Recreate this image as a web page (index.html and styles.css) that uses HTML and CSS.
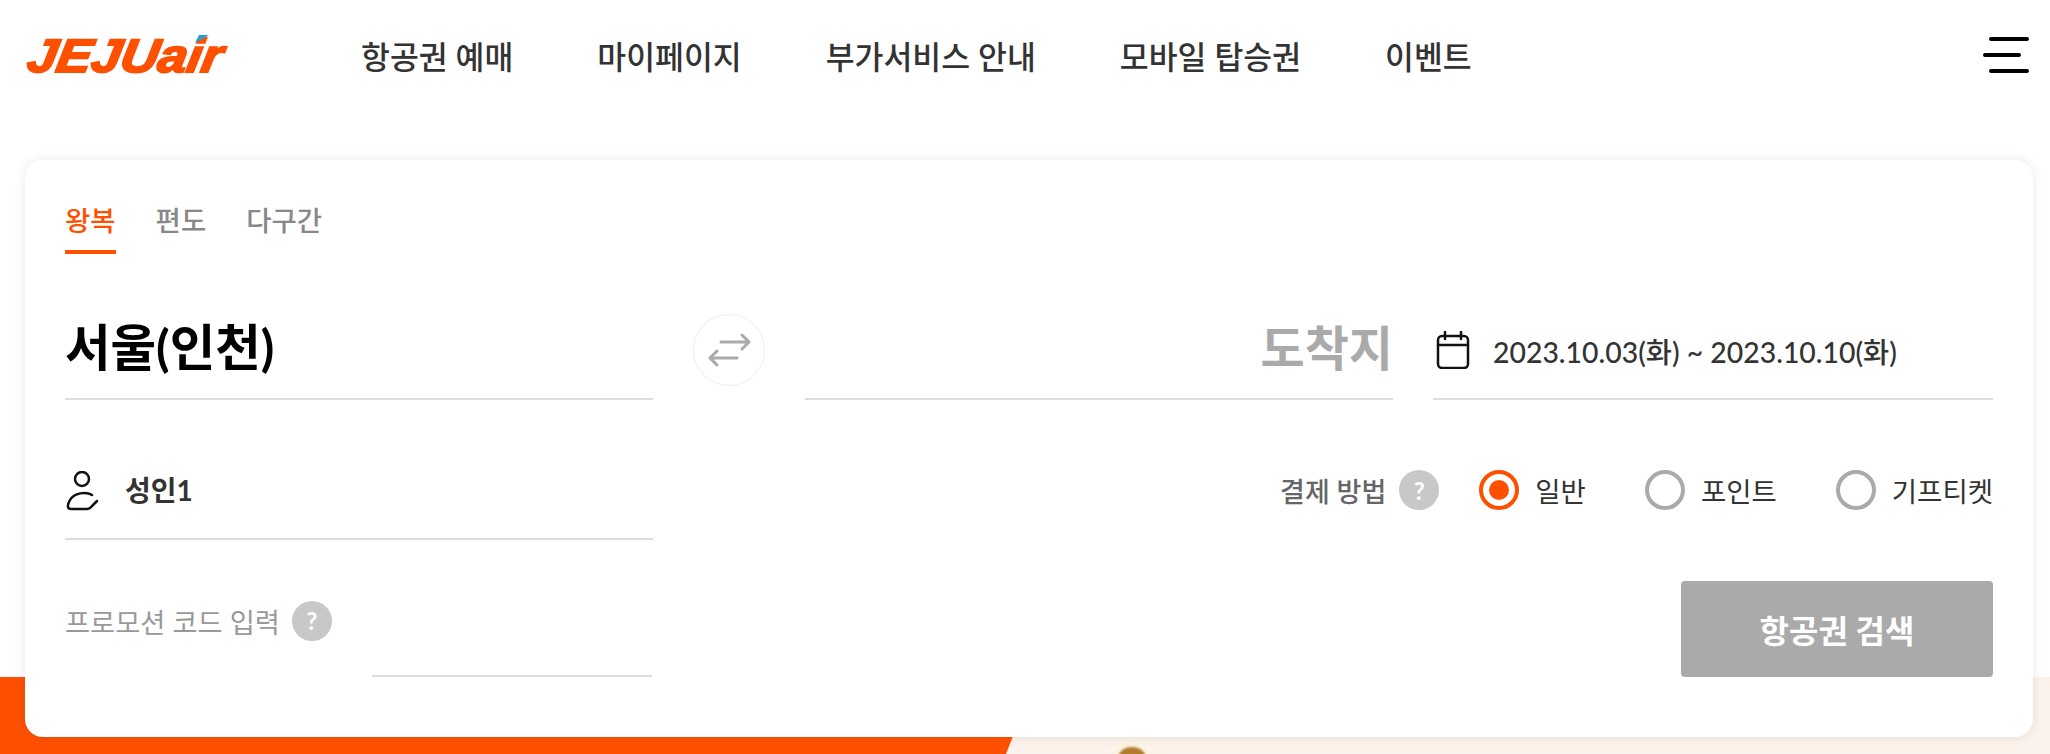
FILE: index.html
```html
<!DOCTYPE html>
<html lang="ko">
<head>
    <meta charset="UTF-8">
    <meta name="viewport" content="width=device-width, initial-scale=1.0">
    <title>JEJUair</title>
    <link rel="stylesheet" href="styles.css">
</head>
<body>
    <header class="header">
        <a class="logo" href="#">
            <span class="logo-text">JEJUair</span>
            <svg class="logo-mark" width="14" height="8" viewBox="0 0 14 8"><polygon points="4,0 14,0 0,8" fill="#1ba3dc"/></svg>
        </a>
        <nav class="nav">
            <a href="#">항공권 예매</a>
            <a href="#">마이페이지</a>
            <a href="#">부가서비스 안내</a>
            <a href="#">모바일 탑승권</a>
            <a href="#">이벤트</a>
        </nav>
        <button class="menu-btn" aria-label="메뉴">
            <svg width="46" height="38" viewBox="0 0 46 38" fill="none" stroke="#000" stroke-width="4" stroke-linecap="round">
                <path d="M8 2H44M2 18H36M8 34H44"/>
            </svg>
        </button>
    </header>

    <main class="search-area">
        <div class="band"><span class="band-figure"></span></div>

        <section class="card">
            <div class="tabs">
                <a class="tab active" href="#">왕복</a>
                <a class="tab" href="#">편도</a>
                <a class="tab" href="#">다구간</a>
            </div>

            <div class="route-row">
                <div class="field city">서울(인천)</div>
                <div class="swap">
                    <button class="swap-btn" aria-label="바꾸기">
                        <svg width="70" height="70" viewBox="0 0 70 70" fill="none" stroke="#aaa" stroke-width="3" stroke-linecap="round" stroke-linejoin="round">
                            <path d="M27 27H55M48 20L55 27L48 34"/>
                            <path d="M43 43H16M23 36L16 43L23 50"/>
                        </svg>
                    </button>
                </div>
                <div class="field city placeholder">도착지</div>
                <div class="field date">
                    <svg width="34" height="38" viewBox="0 0 34 38" fill="none" stroke="#111" stroke-width="2.5" stroke-linecap="round">
                        <rect x="2" y="5" width="30" height="32" rx="4"/>
                        <path d="M2 14H32M9 1V8M25 1V8"/>
                    </svg>
                    <span>2023.10.03(화) ~ 2023.10.10(화)</span>
                </div>
            </div>

            <div class="options-row">
                <div class="field passenger">
                    <svg class="passenger-icon" width="34" height="40" viewBox="0 0 34 40" fill="none" stroke="#111" stroke-width="2.5" stroke-linecap="round" stroke-linejoin="round">
                        <circle cx="16" cy="8" r="7"/>
                        <path d="M26 24C20 20 8 22 4 29C1 34 1 38 5 38H21C24 38 25 36 27 34L31 30"/>
                    </svg>
                    <span>성인1</span>
                </div>
                <div class="payment">
                    <span class="payment-label">결제 방법</span>
                    <span class="help">?</span>
                    <label class="radio checked"><i></i>일반</label>
                    <label class="radio"><i></i>포인트</label>
                    <label class="radio"><i></i>기프티켓</label>
                </div>
            </div>

            <div class="promo-row">
                <div class="promo">
                    <span class="promo-label">프로모션 코드 입력</span>
                    <span class="help">?</span>
                    <span class="promo-input"></span>
                </div>
                <button class="search-btn">항공권 검색</button>
            </div>
        </section>
    </main>
</body>
</html>
```

FILE: styles.css
```css
* {
    box-sizing: border-box;
}
html, body {
    margin: 0;
    height: 754px;
    overflow: hidden;
}
body {
    font-family: Lato, "Noto Sans CJK KR", sans-serif;
    background-color: #fff;
    color: #333;
}
a {
    color: inherit;
    text-decoration: none;
}
button {
    font-family: inherit;
    border: 0;
    padding: 0;
    background: none;
}

.header {
    display: flex;
    align-items: center;
    height: 112px;
    padding: 0 21px 0 24px;
    margin-bottom: 48px;
}
.logo {
    position: relative;
    display: block;
    width: 204px;
    margin-right: 133px;
}
.logo-text {
    display: block;
    font-family: "Liberation Sans", sans-serif;
    font-size: 47px;
    line-height: 50px;
    font-weight: bold;
    font-style: italic;
    color: #ff5000;
    -webkit-text-stroke: 2px #ff5000;
    transform: skewX(-10deg) scaleX(1.11);
    transform-origin: left bottom;
}
.logo-mark {
    position: absolute;
    left: 171px;
    top: 4px;
}
.nav {
    display: flex;
    gap: 84px;
    font-size: 31.4px;
    font-weight: 500;
    flex: 1;
    margin-top: -2px;
}
.menu-btn {
    display: block;
    height: 38px;
}

.search-area {
    position: relative;
    padding: 0 17px 17px 25px;
}
.band {
    position: absolute;
    left: 0;
    right: 0;
    bottom: 0;
    height: 77px;
    background-color: #fbf2ec;
    overflow: hidden;
}
.band::before {
    content: "";
    position: absolute;
    inset: 0;
    background-color: #ff5000;
    clip-path: polygon(0 0, 1036px 0, 1006px 100%, 0 100%);
}
.band-figure {
    position: absolute;
    left: 1118px;
    top: 70px;
    width: 28px;
    height: 22px;
    border-radius: 50%;
    background-color: #b27c2e;
    box-shadow: 0 0 12px 6px #fdf7e2;
    filter: blur(1px);
}
.card {
    position: relative;
    height: 577px;
    padding: 0 40px;
    background-color: #fff;
    border-radius: 18px;
    box-shadow: 0 0 12px rgba(0, 0, 0, 0.09);
}

.tabs {
    display: flex;
    gap: 40px;
    height: 94px;
    padding-top: 40px;
}
.tab {
    height: 54px;
    font-size: 27.5px;
    font-weight: 500;
    line-height: 41px;
    color: #888;
}
.tab.active {
    color: #ff5000;
    border-bottom: 4px solid #ff5000;
}

.field {
    display: flex;
    align-items: center;
    border-bottom: 2px solid #ddd;
}
.route-row {
    display: grid;
    grid-template-columns: 588px 152px 588px 560px;
    height: 146px;
}
.route-row .field {
    height: 146px;
    padding-top: 48px;
}
.route-row .city {
    padding-top: 37px;
}
.route-row .date {
    margin-left: 40px;
    width: 560px;
    gap: 23px;
    font-size: 28.4px;
    font-weight: 500;
    padding-left: 3px;
}
.city {
    font-size: 49.5px;
    font-weight: 700;
    color: #000;
}
.city.placeholder {
    font-size: 48px;
    justify-content: flex-end;
    color: #aaa;
}
.swap {
    display: flex;
    justify-content: center;
    padding-top: 60px;
}
.swap-btn {
    width: 72px;
    height: 72px;
    border: 1px solid #eee;
    border-radius: 50%;
}

.options-row {
    display: flex;
    justify-content: space-between;
    height: 140px;
}
.passenger {
    width: 588px;
    height: 140px;
    padding-top: 40px;
    padding-left: 1px;
    gap: 25px;
    font-size: 28px;
    font-weight: 700;
}
.passenger-icon {
    margin-top: 3px;
}
.payment {
    display: flex;
    align-items: center;
    height: 140px;
    padding-top: 40px;
    font-size: 27.5px;
}
.payment-label {
    font-size: 27px;
    color: #666;
    font-weight: 500;
    margin-right: 13px;
}
.help {
    display: flex;
    align-items: center;
    justify-content: center;
    width: 40px;
    height: 40px;
    border-radius: 50%;
    background-color: #c8c8c8;
    color: #fff;
    font-size: 24px;
    font-weight: 700;
}
.radio {
    display: flex;
    align-items: center;
    gap: 16px;
    margin-left: 40px;
}
.radio + .radio {
    margin-left: 59px;
}
.radio i {
    display: flex;
    align-items: center;
    justify-content: center;
    width: 40px;
    height: 40px;
    border: 4px solid #aaa;
    border-radius: 50%;
}
.radio.checked i {
    border-color: #ff5000;
}
.radio.checked i::after {
    content: "";
    width: 20px;
    height: 20px;
    border-radius: 50%;
    background-color: #ff5000;
}

.promo-row {
    display: flex;
    justify-content: space-between;
    align-items: flex-end;
    height: 137px;
}
.promo {
    display: flex;
    align-items: center;
    width: 587px;
    height: 137px;
    padding-top: 24px;
    position: relative;
}
.promo-label {
    font-size: 27.3px;
    color: #999;
    margin-right: 12px;
}
.promo-input {
    position: absolute;
    left: 307px;
    right: 0;
    bottom: 0;
    border-bottom: 2px solid #ddd;
}
.search-btn {
    width: 312px;
    height: 96px;
    background-color: #aaa;
    border-radius: 4px;
    color: #fff;
    font-size: 32px;
    font-weight: 700;
}
```
